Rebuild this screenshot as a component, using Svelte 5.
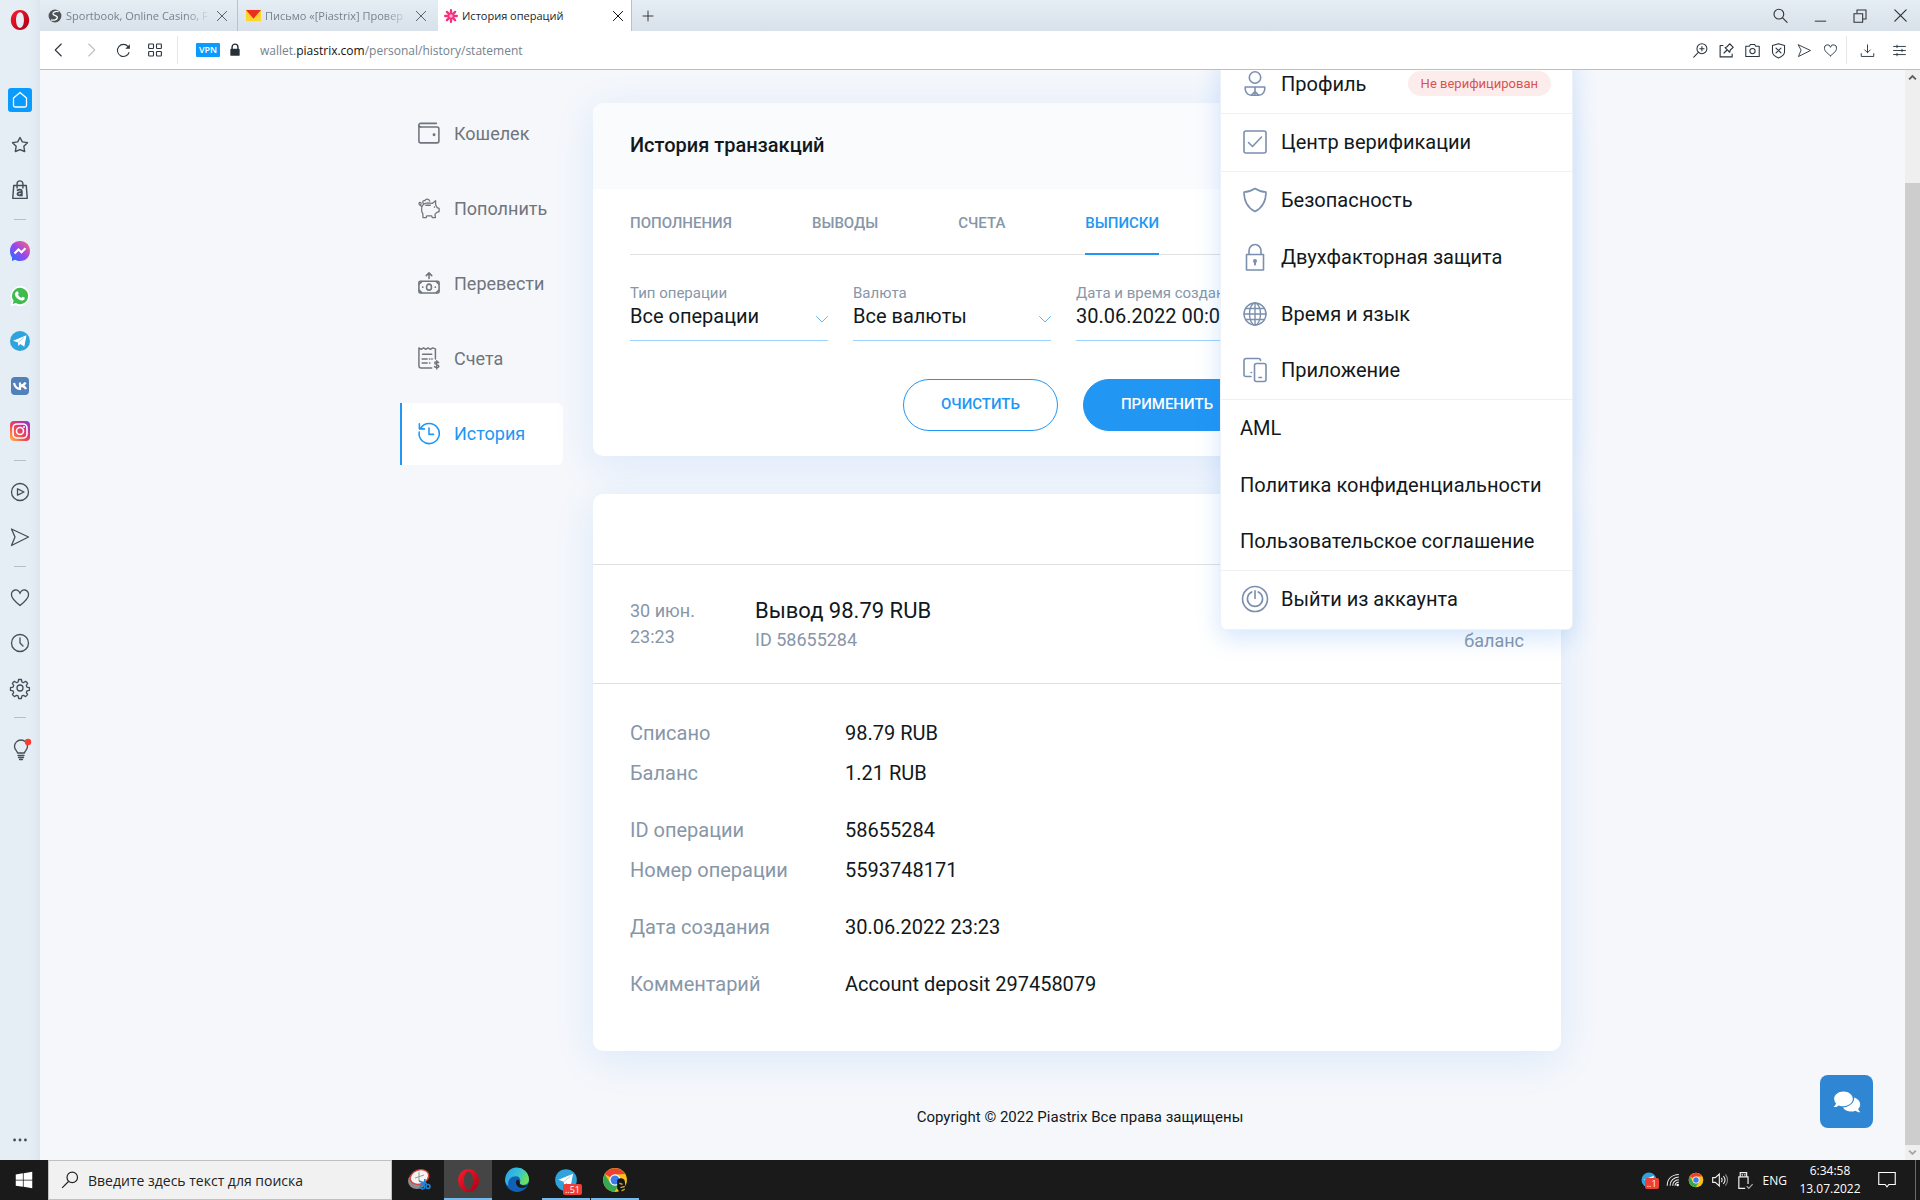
<script>
  const O = 'fill="none" stroke="currentColor" stroke-linecap="round" stroke-linejoin="round"';

  const operaRing = (id) => `
    <defs><linearGradient id="${id}" x1="0" y1="0" x2="1" y2="1"><stop offset="0" stop-color="#ff1b2d"/><stop offset="1" stop-color="#a70014"/></linearGradient></defs>
    <path fill="url(#${id})" fill-rule="evenodd" d="M12 1C6 1 2 6 2 12s4 11 10 11 10-5 10-11S18 1 12 1zm0 2.500c2.600 0 4.300 3.600 4.300 8.500s-1.700 8.500-4.300 8.500-4.300-3.600-4.300-8.500 1.700-8.500 4.300-8.500z"/>`;
  const chrome = `
    <circle cx="12" cy="12" r="11" fill="#fbc116"/>
    <path fill="#ea4335" d="M12 12 2.500 6.500A11 11 0 0 1 21.500 6.500L12 7z"/>
    <path fill="#34a853" d="M2.500 6.500A11 11 0 0 0 11.500 23l5-8.500L12 12 7.500 14.500z"/>
    <circle cx="12" cy="12" r="5.200" fill="#fff"/><circle cx="12" cy="12" r="4.100" fill="#3b7ded"/>`;
  const plane = '<path fill="#fff" d="M5 11.700 18.500 6.300 16.300 17.800 12.300 14.900 10.300 16.900 9.900 13.500z"/><path stroke="#9cc9e6" stroke-width=".8" d="m10 13.500 6-5"/>';

  const icons = {
    home: `<rect width="24" height="24" rx="3" fill="#0a9bff"/><path fill="none" stroke="#fff" stroke-width="1.300" stroke-linejoin="round" d="M5.500 10 12 4.500l6.500 5.500v7.500a1.500 1.500 0 0 1-1.500 1.500H7a1.500 1.500 0 0 1-1.500-1.500z"/>`,
    star: `<path ${O} stroke-width="1.700" d="m12 3 2.800 5.200 6.200 1-4.400 4.300 1 6.300-5.600-2.300-5.600 2.300 1-6.300L3 9.200l6.200-1z"/>`,
    shop: `<g ${O} stroke-width="1.700"><path d="M4.500 6.500h15l1.200 15.500H3.300z"/><path d="M8.500 9.500V4.500a3.500 3.500 0 0 1 7 0v5"/><path stroke-width="2.200" d="M9 12.300c1.600-1.200 5.200-1 5.200 1.200v5.200M14 14.800c-2-.2-5 0-5 2 0 2.400 4 1.900 5 .2"/></g>`,
    messenger: `<defs><linearGradient id="ms" x1="0" y1="1" x2="1" y2="0"><stop offset="0" stop-color="#1677ff"/><stop offset=".5" stop-color="#9b45ef"/><stop offset="1" stop-color="#ff6b68"/></linearGradient></defs><path fill="url(#ms)" d="M12 2C6 2 2 6.300 2 12c0 3 1 5.300 2 6.500V22l3-1.300c1.500.8 3.100 1.300 5 1.300 6 0 10-4.300 10-10S18 2 12 2z"/><path fill="none" stroke="#fff" stroke-width="2.200" d="m6.500 14.500 4-4 3 2.700 4-4"/>`,
    whatsapp: `<path fill="#fff" d="M12 2a10 10 0 1 1-4.500 19L2.500 22 4 17A10 10 0 0 1 12 2z"/><path fill="#3fbb50" d="M12 3.800a8.200 8.200 0 1 1-4.200 15.300L4.700 20l.9-3.200A8.200 8.200 0 0 1 12 3.800z"/><path fill="#fff" d="M8.600 7.600c1-.7 1.500.1 2 1.500.4 1-.9 1.400-.5 2 .8 1.300 1.800 2.200 3 2.700.7.200 1-1.200 1.700-1 1.700.7 2.100 1 1.900 1.600-.5 1.900-2.500 2.400-4.300 1.800-3-1.100-4.700-3-5.400-5.300-.3-1.200.4-2.600 1.600-3.300z"/>`,
    telegram: `<circle cx="12" cy="12" r="10" fill="#2fa3dc"/>${plane}`,
    vk: `<rect x="3" y="3" width="18" height="18" rx="4" fill="#5181b8"/><path fill="none" stroke="#fff" stroke-width="2.200" d="M6 9c.8 3.500 2.500 5.600 6 6V8.500M17.500 8.500c-.8 2-2.700 3-5.200 3.300 3 0 4.900 1.200 5.700 3.400"/>`,
    instagram: `<defs><linearGradient id="ig" x1="0" y1="1" x2="1" y2="0"><stop offset="0" stop-color="#ffc04d"/><stop offset=".4" stop-color="#f4474f"/><stop offset=".75" stop-color="#c42f9c"/><stop offset="1" stop-color="#6b49d8"/></linearGradient></defs><rect x="2" y="2" width="20" height="20" rx="4" fill="url(#ig)"/><g fill="none" stroke="#fff" stroke-width="1.600"><rect x="5" y="5" width="14" height="14" rx="4"/><circle cx="12" cy="12" r="3.500"/></g><circle cx="16" cy="8" r="1" fill="#fff"/>`,
    play: `<g ${O} stroke-width="1.300"><circle cx="12" cy="12" r="8.500"/><path d="M9.500 8.800v6.400l6.500-3.200z"/></g>`,
    send: `<path ${O} stroke-width="1.300" d="M3.500 4 20.500 12 3.500 20.500 7 12z"/>`,
    heart: `<path ${O} stroke-width="1.300" d="M12 19.500C7 15.500 3.500 12.500 3.500 9A4.300 4.300 0 0 1 12 7.500 4.300 4.300 0 0 1 20.500 9c0 3.500-3.500 6.500-8.500 10.500z"/>`,
    clock: `<g ${O} stroke-width="1.300"><circle cx="12" cy="12" r="8.500"/><path d="M12 7v5l3 3"/></g>`,
    gear: `<g ${O} stroke-width="1.300"><circle cx="12" cy="12" r="3"/><path d="M10.600 3.500h2.800l.5 2.500 1.500.7 2.200-1.400 2 2-1.300 2.200.6 1.600 2.500.5v2.800l-2.500.5-.6 1.500 1.300 2.200-2 2-2.200-1.300-1.500.6-.5 2.600h-2.800l-.5-2.600-1.500-.6-2.200 1.300-2-2 1.300-2.200-.6-1.500-2.600-.5v-2.800l2.600-.5.6-1.600-1.300-2.200 2-2 2.200 1.400 1.500-.7z"/></g>`,
    bulb: `<g ${O} stroke-width="1.300"><path d="M9.500 16c0-2-3-3.200-3-6.500a6.500 6.500 0 0 1 13 0c0 3.300-3 4.500-3 6.500z"/><path d="M10 18.500h6M10.500 20.500h5M11.500 22.500h3"/></g><circle cx="20" cy="5" r="3.200" fill="#ff3b30"/>`,
    dots: `<g fill="currentColor"><circle cx="5.500" cy="12" r="1.700"/><circle cx="12" cy="12" r="1.700"/><circle cx="18.500" cy="12" r="1.700"/></g>`,
    globe: `<circle cx="12" cy="12" r="11" fill="#4e5357"/><path fill="none" stroke="#fff" stroke-width="2.200" d="M18 4.500c-5-1-10 .5-9.500 4S17 11 16 15s-6.500 5-11 3.500"/>`,
    mail: `<path fill="#ffd42e" d="M0 3h24v18H0z"/><path fill="#e8301d" d="M0 3h24L12 17z"/>`,
    flower: `<g fill="none" stroke="#f6307e" stroke-width="4" stroke-linecap="round"><path d="M12 2v20M2 12h20M5 5l14 14M19 5 5 19"/></g><circle cx="12" cy="12" r="3" fill="#ffb3cb"/>`,
    cross: `<path ${O} stroke-width="1.700" d="m4 4 16 16M20 4 4 20"/>`,
    plus: `<path ${O} stroke-width="1.900" d="M12 2v20M2 12h20"/>`,
    search: `<g ${O} stroke-width="1.500"><circle cx="10.500" cy="9.500" r="6.500"/><path d="m15.500 14.500 6 6"/></g>`,
    minimise: `<path stroke="currentColor" stroke-width="1.400" d="M4 20h16"/>`,
    restore: `<g fill="none" stroke="currentColor" stroke-width="1.600"><path d="M3 8.500h13v13H3z"/><path d="M7.500 8V3H21v13.500h-4.500"/></g>`,
    back: `<path ${O} stroke-width="1.500" d="m15 4-8 8 8 8"/>`,
    forward: `<path ${O} stroke-width="1.500" d="m9 4 8 8-8 8"/>`,
    reload: `<path fill="none" stroke="currentColor" stroke-width="1.500" d="M20 14.500A8.500 8.500 0 1 1 18.500 6.500"/><path fill="currentColor" d="M21 3v6.500h-6.500z"/>`,
    tiles: `<g fill="none" stroke="currentColor" stroke-width="1.500"><rect x="3.500" y="4" width="6.500" height="6" rx="1"/><rect x="14" y="4" width="6.500" height="6" rx="1"/><rect x="3.500" y="14" width="6.500" height="6" rx="1"/><rect x="14" y="14" width="6.500" height="6" rx="1"/></g>`,
    padlock: `<path fill="none" stroke="#26303a" stroke-width="2.400" d="M7 11V7a5 5 0 0 1 10 0v4"/><rect x="4" y="10" width="16" height="12" rx="1.500" fill="#26303a"/>`,
    zoom: `<g ${O} stroke-width="1.500"><circle cx="14" cy="9.500" r="7"/><path d="m9 14.500-6.500 7M14 6.500v6M11 9.500h6"/></g>`,
    pin: `<g ${O} stroke-width="1.600"><path d="M7 5H3v16h17v-4M8.500 15.500 12 12M10 8l6.500 6.500.8-3.200 4.200-3.800-5-5-3.800 4.200z"/></g>`,
    camera: `<g ${O} stroke-width="1.500"><path d="M2.500 6h5L9 3.500h6L16.500 6h5v14.500h-19z"/><circle cx="12" cy="12.800" r="3.700"/></g>`,
    shieldx: `<g ${O} stroke-width="1.500"><path d="M12 2.500 20.500 5v9c0 4-4 6.500-8.500 8.500-4.500-2-8.500-4.500-8.500-8.500V5z"/><path d="m8.500 8.500 7 7M15.500 8.500l-7 7"/></g>`,
    download: `<path ${O} stroke-width="1.500" d="M12 3v12.500M7.500 11l4.500 4.500 4.500-4.500M2 17v4.500h20V17"/>`,
    sliders: `<path ${O} stroke-width="1.500" d="M2.500 5.500h19M2.500 12h19M2.500 18.500h19M8 3.500v4M16 10v4M8 16.500v4"/>`,
    wallet: `<g ${O} stroke-width="1.700"><path d="M20 1.500H3A1.800 1.800 0 0 0 1 3.300v17.500c0 1.200.8 2 2 2h17.800c1.200 0 2-.8 2-2V7.500c0-1.200-.8-2-2-2H3"/><path d="M1 3.500c0 1.300.8 2 2 2"/></g><circle cx="17.500" cy="14" r="1.600" fill="currentColor"/>`,
    piggy: `<g ${O} stroke-width="1.400"><path d="M1.500 6c1.500-.5 2.500 1 1.500 2.500-1.500 1-2.500-1-1.500-2.500M2 8.800c.6 1.200 1.600 1.400 2.700 1M4 14c-.8-4 2-7.300 6.500-7.500l5 .5 3.700-3v4.500l1.600 3 2.200.8v3.700l-2.500.8-2 2.200.5 3.500h-3.500l-.5-2H9.500l-.5 2H5.500L5.200 18C4.300 17 3.800 15.500 4 14z"/><path d="M6 7.500C4 5 6 3.500 7.500 4 8.500 1.500 12 2 12.800 4.500M8.500 9h5"/></g><circle cx="18" cy="11" r=".9" fill="currentColor"/>`,
    transfer: `<g ${O} stroke-width="1.700"><path d="M12 7V1.500M9 4l3-3 3 3"/><rect x="1" y="10" width="22" height="13" rx="1.500"/><ellipse cx="12" cy="16.500" rx="2.700" ry="3.300"/><path d="M5 16.500h.3M18.700 16.500h.3M1.500 13 4 10.500M22.500 13 20 10.500M1.500 20 4 22.500M22.500 20 20 22.500"/></g>`,
    bill: `<g ${O} stroke-width="1.600"><path d="M15 23H3.500A2.500 2.500 0 0 1 1 20.500V1l2.500 1.500L6 1l2.500 1.500L11 1l2.500 1.500L16 1l3 1v11"/><path d="M5 8h10M4.500 13h5.500M12.500 13h.5M15 13h.5M4.500 17.500h5.500M12.500 17.500h.5"/><path d="M22.500 17c-.7-1.300-4.300-1.500-4.300.5 0 2.200 4.600 1.200 4.600 3.500 0 1.900-3.700 1.900-4.800.3M20.500 15v9"/></g>`,
    history: `<g ${O} stroke-width="1.700"><path d="M3 6.500A11 11 0 1 1 1.300 11"/><path d="M1.500 2v5.500H7M12 6.500v7h5"/></g>`,
    user: `<g ${O} stroke-width="1.600"><circle cx="12" cy="5.500" r="5.700"/><path d="M2.200 15h19.600c.5 4-1.800 8.200-5.800 8.200H8c-4 0-6.300-4.200-5.800-8.200zM12 15v7M12 19.500 8.500 23M12 19.500l3.500 3.500"/></g>`,
    check: `<g ${O} stroke-width="1.600"><rect x="1" y="1" width="22" height="22" rx="2"/><path d="m5.500 12.500 4 4 9-9.500"/></g>`,
    shield: `<path ${O} stroke-width="1.600" d="M12 .500C9 2.500 5 4 1 4c0 9 3 15.500 11 19.500C20 19.500 23 13 23 4 19 4 15 2.500 12 .500z"/>`,
    lock: `<g ${O} stroke-width="1.600"><path d="M3.500 9.500h17V25h-17z"/><path d="M6 9.500V6a6 6.500 0 0 1 12 0v3.500"/><path stroke-width="2" d="M12 16v3.500"/></g><circle cx="12" cy="16" r="2" fill="currentColor"/>`,
    world: `<g ${O} stroke-width="1.400"><circle cx="12" cy="12" r="11"/><ellipse cx="12" cy="12" rx="5.500" ry="11"/><path d="M12 1v22M1 12h22M3 6.500h18M3 17.500h18"/></g>`,
    devices: `<g ${O} stroke-width="1.600"><path d="M8 18.500H3a2 2 0 0 1-2-2V2.500a2 2 0 0 1 2-2h12.500a2 2 0 0 1 2 2"/><rect x="11.500" y="5.500" width="11.500" height="18" rx="2"/><path d="M8 14.500h.5M16 19.500h2.500"/></g>`,
    power: `<g ${O} stroke-width="1.500"><circle cx="12" cy="12" r="11.500"/><path d="M9 5.500a7 7 0 1 0 6 0M12 4.500v7"/></g>`,
    chat: `<path fill="#fff" d="M9 3C4.500 3 1 5.800 1 9.300c0 1.600.6 2.900 1.600 4C2.300 14.600 1.200 15.600.500 16.300c2 .1 3.600-.6 4.600-1.400 1.200.5 2.500.7 3.900.7 4.500 0 8-2.800 8-6.300S13.500 3 9 3z"/><path fill="#fff" d="M18.200 8.200c.3 4.500-4.200 8.300-9.700 8.500 1.200 2.200 4 3.500 7 3.500 1.300 0 2.500-.2 3.700-.7 1 .8 2.500 1.400 4.300 1.300-.7-.6-1.600-1.600-1.900-2.700 1-1.100 1.700-2.400 1.700-3.900 0-2.700-2-5-5.100-6z"/>`,
    windows: `<path fill="#fff" d="M1 4.500 10.500 3v8.500H1zM11.500 2.900 23 1v10.500H11.500zM1 12.500h9.500V21L1 19.500zM11.500 12.500H23V23l-11.500-1.900z"/>`,
    find: `<g fill="none" stroke="#222" stroke-width="1.600"><circle cx="15" cy="8.500" r="7"/><path d="m10 14-8.500 8.500"/></g>`,
    snip: `<ellipse cx="10" cy="13" rx="9" ry="8" fill="#8d8d8d"/><ellipse cx="12.500" cy="9" rx="9.500" ry="7" fill="#f7f4f4" stroke="#d9403c" stroke-width="1.400" transform="rotate(-20 12.500 9)"/><path stroke="#999" d="M12 4v9M8 10l9-3"/><g fill="none" stroke="#1f84d6" stroke-width="1.600"><path d="m12 13 8 3M18 11l-1 6"/><circle cx="15.500" cy="19" r="2"/><circle cx="21" cy="18.500" r="2"/></g>`,
    opera: operaRing('op1'),
    operaBar: operaRing('op2'),
    edge: `<defs><linearGradient id="eg" x1="0" y1="0" x2="1" y2=".4"><stop offset="0" stop-color="#2a9fe4"/><stop offset=".6" stop-color="#35c3d8"/><stop offset="1" stop-color="#6be05a"/></linearGradient></defs><circle cx="12" cy="12" r="11" fill="#1160b8"/><path fill="url(#eg)" d="M1 12A11 11 0 0 1 23 11c.4 3.500-2 5.500-5 5.500-2.500 0-3.800-1-3.500-2 1.500-2.500 0-6-3.500-6-5 0-8 4-7 9-2-1.500-3-3.500-3-5.500z"/><path fill="#1a1a1a" d="M14.500 14.500c-.3 1.500 2 3 5 2.500 1.300-.2 2-.5 2.800-.9-1.800 3-5.800 3.900-8.600 2.500-2.600-1.400-3.400-4.600-1.700-7 1.800.3 2.800 1.600 2.500 2.900z"/>`,
    chrome,
    chromeUser: `${chrome}<path fill="#151515" d="M14 12c2-2.500 6.500-2 7 1l1 7-5 4-3-4z"/><path stroke="#c9a63b" stroke-width="1.300" d="m16 15 3 1M17 19l4-1M18 22l3-1.500"/>`,
    wifi: `<g fill="none" stroke="#eee" stroke-width="1.800"><path d="M2 22C2 10 10 3 22 2.500M7 22c0-8.500 6-14.500 15-15M11.500 22C11.500 16 16 12 22 11.500M15.500 22c0-3.500 3-6 6.500-6.500"/></g><circle cx="20" cy="20.500" r="2.200" fill="#fff"/>`,
    volume: `<g fill="none" stroke="#eee" stroke-width="1.700"><path d="M1 8.500h4L11 3v18l-6-5.500H1zM14 9c1.500 1.500 1.500 4.500 0 6M17 6c3 3.500 3 8.500 0 12"/><path stroke="#888" d="M20 3.500c4.500 5 4.500 12 0 17"/></g>`,
    usb: `<g fill="none" stroke="#eee" stroke-width="1.700"><path d="M6 1h9v6H6zM17 17V7H4v16h9"/><path stroke="#aaa" d="m15 20 3 3 5.500-6"/></g><path fill="#fff" d="M8 3h2v2H8zM11.500 3h2v2h-2z"/>`,
    notice: `<path fill="none" stroke="#fff" stroke-width="1.500" d="M1 2h22v16h-8.500L12 21l-2.500-3H1z"/>`,
    up: `<path fill="none" stroke="#606060" stroke-width="5" d="m3 17 9-9 9 9"/>`,
    down: `<path fill="none" stroke="#a8a8a8" stroke-width="5" d="m3 7 9 9 9-9"/>`,
    chevron: `<path ${O} stroke-width="2" d="m1 7 11 11L23 7"/>`,
  };

  const rail = [
    ['home', 'Экспресс-панель', 24], ['star', 'Закладки', 20], ['shop', 'Магазин', 20], null,
    ['messenger', 'Messenger', 24], ['whatsapp', 'WhatsApp', 24], ['telegram', 'Telegram', 24],
    ['vk', 'ВКонтакте', 24], ['instagram', 'Instagram', 24], null,
    ['play', 'Плеер', 24], ['send', 'Мой поток', 24], null,
    ['heart', 'Личные новости', 24], ['clock', 'История', 24], ['gear', 'Настройки', 24], null,
    ['bulb', 'Советы', 24],
  ];
  const tools = [
    ['zoom', 'Масштаб'], ['pin', 'Закрепить'], ['camera', 'Снимок'],
    ['shieldx', 'Блокировка'], ['send', 'Отправить'], ['heart', 'В закладки'],
  ];
  const menu = [
    ['wallet', 'Кошелек'], ['piggy', 'Пополнить'], ['transfer', 'Перевести'],
    ['bill', 'Счета'], ['history', 'История'],
  ];
  const sections = ['Пополнения', 'Выводы', 'Счета', 'Выписки'];
  const details = [
    [['Списано', '98.79 RUB'], ['Баланс', '1.21 RUB']],
    [['ID операции', '58655284'], ['Номер операции', '5593748171']],
    [['Дата создания', '30.06.2022 23:23']],
    [['Комментарий', 'Account deposit 297458079']],
  ];
  const settings = [
    ['shield', 'Безопасность'], ['lock', 'Двухфакторная защита'],
    ['world', 'Время и язык'], ['devices', 'Приложение'],
  ];
  const legal = ['AML', 'Политика конфиденциальности', 'Пользовательское соглашение'];

  let current = $state('Выписки');
</script>

{#snippet icon(name, size)}
  <svg class="icon" width={size} height={size} viewBox="0 0 24 24" aria-hidden="true">{@html icons[name]}</svg>
{/snippet}

<div class="desktop">
  <div class="browser">
    <aside class="rail">
      <button class="logo" aria-label="Opera">{@render icon('opera', 22)}</button>
      {#each rail as item}
        {#if item}
          <button aria-label={item[1]}>{@render icon(item[0], item[2])}</button>
        {:else}
          <span class="rule"></span>
        {/if}
      {/each}
      <button class="more" aria-label="Ещё">{@render icon('dots', 20)}</button>
    </aside>

    <div class="window">
      <div class="strip">
        <div class="tab">
          {@render icon('globe', 14)}<span class="name fade">Sportbook, Online Casino, F</span>
          <button aria-label="Закрыть">{@render icon('cross', 14)}</button>
        </div>
        <div class="tab second">
          {@render icon('mail', 15)}<span class="name fade">Письмо «[Piastrix] Провер</span>
          <button aria-label="Закрыть">{@render icon('cross', 14)}</button>
        </div>
        <div class="tab active">
          {@render icon('flower', 14)}<span class="name">История операций</span>
          <button aria-label="Закрыть">{@render icon('cross', 14)}</button>
        </div>
        <button class="new" aria-label="Новая вкладка">{@render icon('plus', 12)}</button>
        <div class="controls">
          <button aria-label="Поиск">{@render icon('search', 18)}</button>
          <button aria-label="Свернуть">{@render icon('minimise', 17)}</button>
          <button aria-label="Развернуть">{@render icon('restore', 16)}</button>
          <button aria-label="Закрыть окно">{@render icon('cross', 17)}</button>
        </div>
      </div>

      <div class="toolbar">
        <button class="move" aria-label="Назад">{@render icon('back', 18)}</button>
        <button class="move dim" aria-label="Вперёд">{@render icon('forward', 18)}</button>
        <button class="move" aria-label="Обновить">{@render icon('reload', 17)}</button>
        <button class="move" aria-label="Вкладки">{@render icon('tiles', 18)}</button>
        <span class="split"></span>
        <button class="vpn">VPN</button>
        <span class="secure">{@render icon('padlock', 14)}</span>
        <button class="address">wallet.<b>piastrix.com</b>/personal/history/statement</button>
        <div class="tools">
          {#each tools as [name, label]}
            <button aria-label={label}>{@render icon(name, 17)}</button>
          {/each}
        </div>
        <span class="split end"></span>
        <button class="tool" aria-label="Загрузки">{@render icon('download', 15)}</button>
        <button class="tool" aria-label="Простая настройка">{@render icon('sliders', 15)}</button>
      </div>

      <div class="view">
        <div class="page">
          <div class="container">
            <nav class="menu">
              {#each menu as [name, label]}
                <a href="#{name}" class:current={name === 'history'}>{@render icon(name, 22)}{label}</a>
              {/each}
            </nav>

            <main>
              <section class="card filters">
                <h1>История транзакций</h1>
                <div class="body">
                  <div class="sections" role="tablist">
                    {#each sections as label}
                      <button role="tab" aria-selected={label === current} class:on={label === current} onclick={() => (current = label)}>{label}</button>
                    {/each}
                  </div>
                  <form onsubmit={(e) => e.preventDefault()}>
                    <div class="fields">
                      <div class="field">
                        <label for="kind">Тип операции</label>
                        <select id="kind"><option>Все операции</option></select>
                        <span class="arrow">{@render icon('chevron', 12)}</span>
                      </div>
                      <div class="field">
                        <label for="currency">Валюта</label>
                        <select id="currency"><option>Все валюты</option></select>
                        <span class="arrow">{@render icon('chevron', 12)}</span>
                      </div>
                      <div class="field wide">
                        <label for="created">Дата и время создания</label>
                        <input id="created" type="text" value="30.06.2022 00:00" />
                      </div>
                    </div>
                    <div class="actions">
                      <button type="reset">Очистить</button>
                      <button type="submit" class="primary">Применить</button>
                    </div>
                  </form>
                </div>
              </section>

              <section class="card">
                <div class="blank"></div>
                <div class="operation">
                  <div class="when">30 июн.<br />23:23</div>
                  <div class="what">
                    <h2>Вывод 98.79 RUB</h2>
                    <p>ID 58655284</p>
                  </div>
                  <div class="where">баланс</div>
                </div>
                <div class="details">
                  {#each details as group}
                    <dl>
                      {#each group as [term, value]}
                        <div><dt>{term}</dt><dd>{value}</dd></div>
                      {/each}
                    </dl>
                  {/each}
                </div>
              </section>
              <footer>Copyright © 2022 Piastrix Все права защищены</footer>
            </main>

            <div class="account">
              <a href="#profile" class="tall lined">{@render icon('user', 24)}Профиль<span class="badge">Не верифицирован</span></a>
              <a href="#verification" class="tall lined">{@render icon('check', 24)}Центр верификации</a>
              <div class="group">
                {#each settings as [name, label]}
                  <a href="#{name}">{@render icon(name, 24)}{label}</a>
                {/each}
              </div>
              <div class="group">
                {#each legal as label}
                  <a href="#legal" class="plain">{label}</a>
                {/each}
              </div>
              <a href="#exit" class="tall exit">{@render icon('power', 26)}Выйти из аккаунта</a>
            </div>
          </div>
          <button class="chat" aria-label="Чат">{@render icon('chat', 28)}</button>
        </div>
        <div class="scroll" aria-hidden="true">
          <span class="cap">{@render icon('up', 9)}</span>
          <span class="track"></span>
          <span class="thumb"></span>
          <span class="cap">{@render icon('down', 9)}</span>
        </div>
      </div>
    </div>
  </div>

  <div class="taskbar">
    <button class="start" aria-label="Пуск">{@render icon('windows', 18)}</button>
    <label class="find">
      {@render icon('find', 18)}
      <input type="search" placeholder="Введите здесь текст для поиска" aria-label="Поиск" />
    </label>
    <div class="apps">
      <button aria-label="Ножницы">{@render icon('snip', 24)}</button>
      <button class="open focus" aria-label="Opera">{@render icon('operaBar', 25)}</button>
      <button aria-label="Edge">{@render icon('edge', 26)}</button>
      <button class="open" aria-label="Telegram">{@render icon('telegram', 26)}<span class="count">..51</span></button>
      <button class="open" aria-label="Chrome">{@render icon('chromeUser', 26)}</button>
    </div>
    <div class="tray">
      <span class="mark">{@render icon('telegram', 18)}<span class="count">..1</span></span>
      <span>{@render icon('wifi', 14)}</span>
      <span>{@render icon('chrome', 16)}</span>
      <span>{@render icon('volume', 16)}</span>
      <span>{@render icon('usb', 17)}</span>
    </div>
    <span class="lang">ENG</span>
    <div class="time">6:34:58<br />13.07.2022</div>
    <button class="notice" aria-label="Уведомления">{@render icon('notice', 18)}</button>
    <span class="peek"></span>
  </div>
</div>

<style>
  :global(body) { margin: 0; }
  * { box-sizing: border-box; }
  button { border: 0; padding: 0; background: none; font: inherit; color: inherit; cursor: pointer; }
  a { color: inherit; text-decoration: none; }
  .icon { display: block; flex: none; overflow: visible; }

  .desktop { display: flex; flex-direction: column; min-height: 100vh; font-family: "Open Sans", "Noto Sans", sans-serif; }
  .browser { display: flex; flex: 1; background: #e5edf5; }

  .rail { display: flex; flex-direction: column; align-items: center; width: 40px; flex: none; color: #444e58; background: linear-gradient(90deg, #e5edf5 75%, #dde5ee); }
  .rail button { display: flex; align-items: center; justify-content: center; width: 40px; height: 45px; }
  .rail .logo { height: 40px; margin-bottom: 37px; }
  .rail .rule { width: 12px; height: 1px; margin: 7px 0 8px; background: #b4c1cd; }
  .rail .more { height: 40px; margin-top: auto; }

  .window { display: flex; flex-direction: column; flex: 1; min-width: 0; }
  .strip { display: flex; align-items: stretch; height: 31px; color: #75828d; background: linear-gradient(#e5edf5, #d8e0e9); }
  .tab { display: flex; align-items: center; gap: 4px; width: 198px; padding: 0 8px; border-right: 1px solid #b8c2cc; }
  .tab button { color: #555e66; }
  .tab.second { width: 200px; border-right: 0; padding-right: 10px; }
  .tab.active { width: 194px; padding-left: 6px; padding-right: 6px; background: #fff; color: #20262c; }
  .tab.active button { color: #111; }
  .tab .name { flex: 1; white-space: nowrap; font-size: 11px; }
  .tab .fade { mask-image: linear-gradient(90deg, #000 82%, transparent); }
  .new { padding: 0 10px; color: #333; }
  .controls { display: flex; margin-left: auto; color: #333; }
  .controls button { display: flex; align-items: center; justify-content: center; width: 40px; }

  .toolbar { display: flex; align-items: center; height: 39px; padding-left: 3px; background: #fff; border-bottom: 1px solid #b5c0cc; color: #2b353f; font-size: 12px; }
  .move { display: flex; justify-content: center; width: 32px; }
  .dim { color: #bcc0c4; }
  .split { width: 1px; height: 28px; margin: 0 9px 0 6px; background: #e4e6e9; }
  .split.end { margin: 0 8px 0 3px; }
  .vpn { width: 24px; height: 14px; margin-left: 9px; background: #0a9bff; color: #fff; border-radius: 1px; font-size: 9px; font-weight: 600; line-height: 14px; }
  .secure { margin: 0 18px 0 8px; }
  .address { flex: 1; text-align: left; color: #75828d; }
  .address b { font-weight: 400; color: #111; }
  .tools { display: flex; }
  .tools button { display: flex; justify-content: center; width: 26px; }
  .tool { display: flex; justify-content: center; width: 24px; }
  .tool:last-child { margin: 0 9px 0 8px; }

  .view { display: flex; flex: 1; }
  .page { position: relative; flex: 1; overflow: hidden; background: #f5f7fb; font-family: Roboto, sans-serif; color: #111820; }
  .container { position: relative; display: flex; gap: 30px; max-width: 1199px; margin: 0 auto; padding: 33px 11px 0 27px; }

  .menu { display: flex; flex-direction: column; gap: 13px; width: 163px; flex: none; font-size: 18px; color: #70757d; }
  .menu a { display: flex; align-items: center; gap: 14px; height: 62px; padding: 0 0 2px 16px; border-left: 2px solid transparent; border-radius: 0 6px 6px 0; }
  .menu .current { background: #fff; border-color: #2196f3; color: #2196f3; }

  main { flex: 1; min-width: 0; }
  .card { background: #fff; border-radius: 10px; box-shadow: 0 8px 40px rgba(33, 130, 243, .12); margin-bottom: 38px; }
  h1 { margin: 0; padding: 0 37px 2px; font-size: 20px; font-weight: 500; line-height: 84px; background: #fafbfd; border-radius: 10px 10px 0 0; }
  .body { padding: 0 37px 25px; }
  .sections { display: flex; gap: 80px; border-bottom: 1px solid #e0e0e0; }
  .sections button { height: 66px; margin-bottom: -1px; padding: 3px 0 0; border-bottom: 2px solid transparent; font-size: 15px; font-weight: 500; text-transform: uppercase; color: #8796a8; }
  .sections .on { color: #2196f3; border-color: #2196f3; }
  .fields { display: flex; gap: 25px; padding-top: 29px; }
  .field { position: relative; width: 198px; border-bottom: 1px solid #a0d2fa; }
  .field.wide { flex: 1; }
  .field label { display: block; font-size: 15px; line-height: 18px; color: #8796a8; }
  .field select, .field input { display: block; width: 100%; height: 38px; padding: 0 0 10px; border: 0; background: none; appearance: none; outline: 0; font: 20px/28px Roboto, sans-serif; color: #111820; }
  .arrow { position: absolute; right: 0; bottom: 15px; color: #64b5f6; }
  .actions { display: flex; justify-content: center; gap: 25px; padding-top: 38px; }
  .actions button { height: 52px; padding: 0 37px 2px; border: 1px solid #2196f3; border-radius: 26px; font-size: 15px; font-weight: 500; text-transform: uppercase; color: #2196f3; }
  .actions .primary { background: #2196f3; color: #fff; }

  .blank { height: 71px; border-bottom: 1px solid #e0e0e0; }
  .operation { display: flex; align-items: flex-start; height: 119px; padding: 30px 37px 0; border-bottom: 1px solid #e0e0e0; font-size: 18px; color: #8796a8; }
  .when { width: 125px; padding-top: 3px; line-height: 26px; }
  h2 { margin: 0; font-size: 22px; font-weight: 400; line-height: 32px; color: #111820; }
  .what p { margin: 0; line-height: 26px; }
  .where { margin: 33px 0 0 auto; line-height: 26px; }
  .details { display: flex; flex-direction: column; gap: 17px; padding: 29px 37px 47px; font-size: 20px; line-height: 40px; }
  dl { margin: 0; }
  dl div { display: flex; }
  dt { width: 215px; color: #8796a8; }
  dd { margin: 0; }
  footer { margin: 0 0 14px 6px; text-align: center; font-size: 15px; line-height: 56px; }

  .account { position: absolute; top: -15px; right: -1px; width: 353px; background: #fff; border: 1px solid #eef1f5; border-radius: 0 0 6px 6px; box-shadow: 0 8px 24px rgba(33, 130, 243, .2); font-size: 20px; }
  .account a { display: flex; align-items: center; gap: 14px; height: 57px; padding: 0 21px 2px 22px; }
  .account .icon { color: #7b8fae; }
  .account .tall { height: 58px; }
  .account .exit { gap: 13px; padding-left: 21px; }
  .account .plain { padding-left: 19px; }
  .lined, .group a:last-child { border-bottom: 1px solid #eef0f2; }
  .badge { margin-left: auto; padding: 0 13px; border-radius: 13px; background: #fdecec; color: #d9534f; font-size: 13px; line-height: 25px; }
  .chat { position: absolute; right: 32px; bottom: 32px; display: flex; align-items: center; justify-content: center; width: 53px; height: 53px; border-radius: 8px; background: #2f86d2; }

  .scroll { display: flex; flex-direction: column; width: 15px; background: #efefef; }
  .cap { display: flex; align-items: center; justify-content: center; height: 15px; }
  .track { flex: 10; }
  .thumb { flex: 98; background: #cdcdcd; }

  .taskbar { display: flex; align-items: center; height: 40px; background: #1a1a1a; color: #fff; }
  .start { display: flex; justify-content: center; width: 48px; }
  .find { display: flex; align-items: center; gap: 9px; width: 344px; height: 40px; padding-left: 12px; background: #f1f1f1; border: 1px solid #bfbfbf; }
  .find input { flex: 1; min-width: 0; border: 0; padding: 0; outline: 0; background: none; font: 14px "Open Sans", sans-serif; }
  .find input::placeholder { color: #222; opacity: 1; }
  .apps { display: flex; gap: 1px; padding-left: 3px; }
  .apps button { position: relative; display: flex; align-items: center; justify-content: center; width: 48px; height: 40px; }
  .apps .open { box-shadow: inset 0 -2px #76b9ed; }
  .apps .focus { background: #454545; }
  .count { position: absolute; right: 8px; bottom: 5px; padding: 0 2px; border-radius: 2px; background: #f03e36; font-size: 9px; line-height: 11px; }
  .tray { display: flex; align-items: center; gap: 8px; margin-left: auto; }
  .mark { position: relative; }
  .mark .count { right: -1px; bottom: 0; }
  .lang { margin: 0 11px 0 10px; font-size: 12px; }
  .time { width: 64px; text-align: center; font-size: 12px; line-height: 18px; white-space: nowrap; }
  .notice { margin-left: 16px; }
  .peek { width: 1px; height: 40px; margin: 0 4px 0 19px; background: #6a6a6a; }
</style>
